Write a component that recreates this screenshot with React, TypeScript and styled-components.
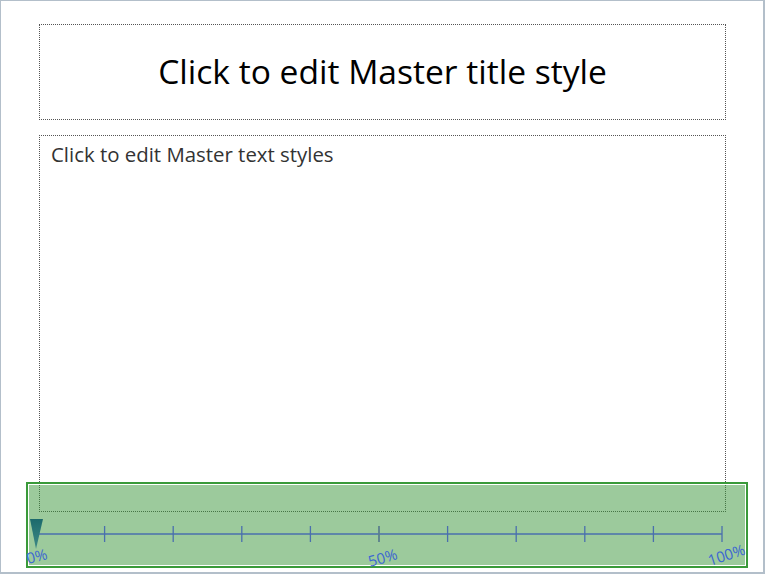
import React from "react";
import styled, {createGlobalStyle} from "styled-components";

const GlobalStyle = createGlobalStyle`
 html, body {
  margin: 0;
  padding: 0;
  background: #fff;
 }
 * { box-sizing: border-box; }
`;

const TICKS = 11;
const RULER_START = 8;
const RULER_END = 694;

const App = () => {
 const step = (RULER_END - RULER_START) / (TICKS - 1);
 const ticks = Array.from({length: TICKS}, (_, i) => RULER_START + i * step);

 return (
  <>
   <GlobalStyle />
   <Frame>
    <Slide>
     <TitleBox>
      <Title>Click to edit Master title style</Title>
     </TitleBox>
     <BodyBox>
      <BodyText>Click to edit Master text styles</BodyText>
     </BodyBox>
    </Slide>
    <RulerPanel>
     <svg width="718" height="82" viewBox="0 0 718 82">
      <defs>
       <linearGradient id="marker" x1="0" y1="0" x2="0" y2="1">
        <stop offset="0" stopColor="#1c6a6c" />
        <stop offset="1" stopColor="#3f8a86" />
       </linearGradient>
      </defs>
      <line x1={RULER_START} y1="50" x2={RULER_END} y2="50" stroke="#4a6fae" strokeWidth="1.3" />
      {ticks.slice(1).map((x, i) => (
       <line
        key={x}
        x1={x}
        y1="42"
        x2={x}
        y2="58"
        stroke={i === 4 ? "#5b7f8e" : "#4a6fae"}
        strokeWidth={i === 4 ? 1.8 : 1.3}
       />
      ))}
      <polygon points="2,35 15,35 8,65" fill="url(#marker)" />
      <g fill="#3b66d2" fontFamily="'Open Sans', 'DejaVu Sans', sans-serif" fontSize="15">
       <text x="0" y="80" transform="rotate(-14 0 80)">0%</text>
       <text x="342" y="83" transform="rotate(-16 342 83)">50%</text>
       <text x="682" y="82" transform="rotate(-18 682 82)">100%</text>
      </g>
     </svg>
    </RulerPanel>
   </Frame>
  </>
 );
};

export default App;

const Frame = styled.div`
 position: relative;
 width: 765px;
 height: 574px;
 border: 1px solid #b3bfca;
 border-right-width: 2px;
 border-bottom-width: 2px;
 background: #fff;
 font-family: "Open Sans", "Liberation Sans", sans-serif;
`;

const Slide = styled.div`
 display: flex;
 flex-direction: column;
 gap: 15px;
 padding: 23px 0 0 38px;
`;

const TitleBox = styled.div`
 width: 687px;
 height: 96px;
 border: 1px dotted #555;
 display: flex;
 align-items: center;
 justify-content: center;
`;

const Title = styled.h1`
 margin: 0;
 font-size: 33.6px;
 font-weight: 400;
 color: #000;
 padding-bottom: 3px;
`;

const BodyBox = styled.div`
 width: 687px;
 height: 377px;
 border: 1px dotted #555;
 padding: 4px 11px;
`;

const BodyText = styled.p`
 margin: 0;
 font-size: 20.4px;
 color: #333;
`;

const RulerPanel = styled.div`
 position: absolute;
 left: 25px;
 top: 481px;
 width: 722px;
 height: 86px;
 border: 2px solid #3a9a3a;
 box-shadow: inset 0 0 0 1px #fff;
 background: rgba(58, 150, 58, 0.5);

 svg {
  display: block;
  overflow: visible;
 }
`;
